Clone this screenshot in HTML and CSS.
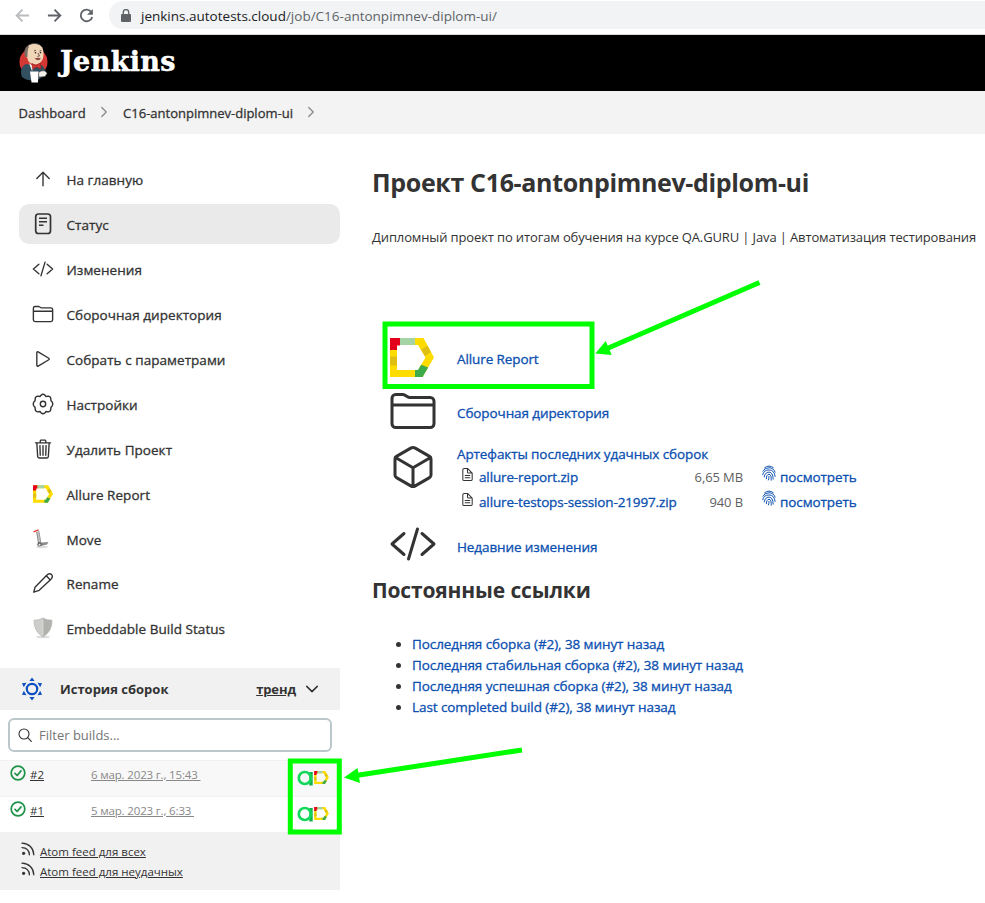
FILE: index.html
```html
<!DOCTYPE html>
<html lang="ru">
<head>
<meta charset="utf-8">
<title>C16-antonpimnev-diplom-ui [Jenkins]</title>
<link rel="stylesheet" href="styles.css">
</head>
<body>
<svg class="defs" width="0" height="0">
  <symbol id="allure" viewBox="0 0 44 39">
    <path fill-rule="evenodd" d="M0 0H33.500L44 19.500L32.500 39H0ZM7 7V32H28L35.500 19.500L28 7Z" fill="#ffdc00"/>
    <path d="M0 0H10V7.500H7V12H0Z" fill="#e3001b"/>
    <path d="M10 0H25V7H10Z" fill="#a4d4a5"/>
    <path d="M37.300 7.500L41 14L35 18.300L31 11.800Z" fill="#dfc012"/>
    <path d="M31.200 26.800L38.200 29.400L32.500 39H25V32H28Z" fill="#3cab49"/>
    <path d="M0 18.500H7V27.500H0Z" fill="#dfc012"/>
  </symbol>
  <symbol id="folder" viewBox="0 0 512 512">
    <path d="M440 432H72a40 40 0 01-40-40V120a40 40 0 0140-40h75.890a40 40 0 0122.190 6.720l27.840 18.560a40 40 0 0022.190 6.720H440a40 40 0 0140 40v240a40 40 0 01-40 40zM32 192h448" fill="none" stroke="currentColor" stroke-linecap="round" stroke-linejoin="round" stroke-width="32"/>
  </symbol>
  <symbol id="code" viewBox="0 0 512 512">
    <path d="M160 368L32 256l128-112M352 368l128-112-128-112M304 96l-96 320" fill="none" stroke="currentColor" stroke-linecap="round" stroke-linejoin="round" stroke-width="32"/>
  </symbol>
  <symbol id="doc" viewBox="0 0 512 512">
    <path d="M416 221.250V416a48 48 0 01-48 48H144a48 48 0 01-48-48V96a48 48 0 0148-48h98.750a32 32 0 0122.620 9.370l141.260 141.260a32 32 0 019.370 22.620zM256 56v120a32 32 0 0032 32h120M176 288h160M176 368h160" fill="none" stroke="currentColor" stroke-linecap="round" stroke-linejoin="round" stroke-width="36"/>
  </symbol>
  <symbol id="chevron" viewBox="0 0 16 16">
    <path d="M5 2l6 6-6 6" fill="none" stroke="currentColor" stroke-width="1.700" stroke-linecap="round" stroke-linejoin="round"/>
  </symbol>
  <symbol id="finger" viewBox="0 0 16 18">
    <path d="M3 3Q8-1 13 3M1 7Q3 3 8 3T15 8M.8 11Q1.800 5.500 8 5.500T15 13M2.500 13.500Q3.500 8 8 8T12.800 16M5 15.500Q5 10.500 8 10.500T10.500 17.300M7.300 17Q8.300 15 8 13" fill="none" stroke="currentColor" stroke-width="1.100" stroke-linecap="round"/>
  </symbol>
  <symbol id="ok" viewBox="0 0 16 16">
    <circle cx="8" cy="8" r="6.800" fill="none" stroke="#1e9248" stroke-width="1.700"/>
    <path d="M5 8.400l2.200 2.100L11 5.900" fill="none" stroke="#1e9248" stroke-width="1.700" stroke-linecap="round" stroke-linejoin="round"/>
  </symbol>
  <symbol id="rss" viewBox="0 0 14 14">
    <path d="M1 1.200C8 1.500 12.500 6 12.800 12.800M1 5.600C5.500 5.800 8.200 8.500 8.400 12.800" fill="none" stroke="currentColor" stroke-width="1.300" stroke-linecap="round"/>
    <circle cx="2.600" cy="11.300" r="1.600" fill="currentColor"/>
  </symbol>
  <symbol id="testops" viewBox="0 0 17 16">
    <path d="M12.300 2h3.400V15.500H12.300z" fill="#13b14c"/>
    <circle cx="7.800" cy="8" r="6" fill="none" stroke="#14d85a" stroke-width="2.700"/>
  </symbol>
</svg>

<div class="browser">
  <svg class="nav" viewBox="0 0 16 16"><path d="M15 8H2M8 1.800L1.800 8 8 14.200" fill="none" stroke="#babcbe" stroke-width="2"/></svg>
  <svg class="nav" viewBox="0 0 16 16"><path d="M1 8h13M8 1.800L14.200 8 8 14.200" fill="none" stroke="#5f6368" stroke-width="2"/></svg>
  <svg class="nav" viewBox="0 0 16 16"><path d="M13.300 4.500A6.200 6.200 0 1014.100 9.500" fill="none" stroke="#5f6368" stroke-width="2"/><path d="M14.800 1v6.300H8.500z" fill="#5f6368"/></svg>
  <div class="omnibox">
    <svg class="lock" viewBox="0 0 10 13"><path d="M1 5h8a1 1 0 011 1v6a1 1 0 01-1 1H1a1 1 0 01-1-1V6a1 1 0 011-1z" fill="#5f6368"/><path d="M2.300 6V3.300a2.700 2.700 0 015.400 0V6" fill="none" stroke="#5f6368" stroke-width="1.300"/></svg>
    <span class="url">jenkins.autotests.cloud<span class="path">/job/C16-antonpimnev-diplom-ui/</span></span>
  </div>
</div>

<header class="header">
  <svg class="butler" viewBox="0 0 30 40">
    <ellipse cx="14.500" cy="19" rx="14" ry="14" fill="#d33833"/>
    <path d="M3 34C1 29 2 23 7 21L13 22 22 22C25 23 27 28 27 32L20 36C14 39 6 37 3 34Z" fill="#335061"/>
    <path d="M7 8C7 3 11 .5 16 .6S24.500 4 24.500 10C25 16 22 21 17 21.500 11 21 9 19 8.500 15 6.500 14 6 11 7 8Z" fill="#f0d6b7"/>
    <path d="M6.500 14C4 9 6 4 9 2.500L10 4C8.500 6 9 8 8.500 10L8.500 14Z" fill="#7c6b62"/>
    <path d="M9 2.500C13-.5 21-.5 23.800 5" fill="none" stroke="#444" stroke-width=".9"/>
    <path d="M15 8l2-.8M20.500 8l2-.6M19 10l1.500 3-2 .4" fill="none" stroke="#5d4a40" stroke-width=".9"/>
    <circle cx="16.500" cy="9.700" r=".8" fill="#222"/><circle cx="21.500" cy="9.600" r=".8" fill="#222"/>
    <path d="M15.500 15.500Q19 14 22 15.500 19.500 19 15.500 15.500Z" fill="#8b4d43"/>
    <path d="M10 20L15 24 13 28Z" fill="#fff"/>
    <path d="M13 20.500L17 22.500 21.500 20 22 26 17.500 24 13.500 26.500Z" fill="#d33833" stroke="#8c1b19" stroke-width=".5"/>
    <path d="M11 28.500H19.500L19 39.500H12.500Z" fill="#fff"/>
    <path d="M19.500 30C22 27 27 27 28 30.500L26 33.500 20 34Z" fill="#f3efe9" stroke="#444" stroke-width=".5"/>
  </svg>
  <span class="brand">Jenkins</span>
</header>

<nav class="crumbs">
  <span>Dashboard</span>
  <svg class="sep"><use href="#chevron"/></svg>
  <span>C16-antonpimnev-diplom-ui</span>
  <svg class="sep"><use href="#chevron"/></svg>
</nav>

<div class="page">
  <aside class="side">
    <div class="tasks">
      <a class="task"><svg viewBox="0 0 512 512"><path d="M112 244l144-144 144 144M256 120v292" fill="none" stroke="currentColor" stroke-linecap="round" stroke-linejoin="round" stroke-width="32"/></svg><span>На главную</span></a>
      <a class="task active"><svg viewBox="0 0 22 22"><rect x="3.700" y="1" width="14.800" height="19.500" rx="2.800" fill="none" stroke="currentColor" stroke-width="1.700"/><path d="M7 5.300h8M7 8.800h8M7 12.300h4.500" fill="none" stroke="currentColor" stroke-width="1.600"/></svg><span>Статус</span></a>
      <a class="task"><svg><use href="#code"/></svg><span>Изменения</span></a>
      <a class="task"><svg><use href="#folder"/></svg><span>Сборочная директория</span></a>
      <a class="task"><svg viewBox="0 0 512 512"><path d="M112 111v290c0 17.440 17 28.520 31 20.160l247.900-148.370c12.120-7.250 12.120-26.330 0-33.580L143 90.840c-14-8.360-31 2.720-31 20.160z" fill="none" stroke="currentColor" stroke-width="32"/></svg><span>Собрать с параметрами</span></a>
      <a class="task"><svg viewBox="0 0 22 22"><path d="M9 2.200Q11 .2 13 2.200L14 3.500 16.500 3.100Q19 3.700 18.800 6.300L19 7.700 20 8.800Q21.500 11 20 13.200L19 14.300 18.800 15.700Q19 18.300 16.500 18.900L14 18.500 13 19.800Q11 21.800 9 19.800L8 18.500 5.500 18.900Q3 18.300 3.200 15.700L3 14.300 2 13.200Q.5 11 2 8.800L3 7.700 3.200 6.300Q3 3.700 5.500 3.100L8 3.500Z" fill="none" stroke="currentColor" stroke-width="1.400" stroke-linejoin="round"/><circle cx="11" cy="11" r="2.700" fill="none" stroke="currentColor" stroke-width="1.400"/></svg><span>Настройки</span></a>
      <a class="task"><svg viewBox="0 0 512 512"><path d="M112 112l20 320c.95 18.490 14.400 32 32 32h184c17.670 0 30.870-13.510 32-32l20-320M80 112h352M192 112V72a23.930 23.930 0 0124-24h80a23.930 23.930 0 0124 24v40M256 176v224M184 176l8 224M328 176l-8 224" fill="none" stroke="currentColor" stroke-linecap="round" stroke-linejoin="round" stroke-width="32"/></svg><span>Удалить Проект</span></a>
      <a class="task"><svg><use href="#allure" x="1" y="2" width="20" height="18"/></svg><span>Allure Report</span></a>
      <a class="task"><svg viewBox="0 0 22 22"><ellipse cx="10" cy="19" rx="6" ry="1.300" fill="#ddd"/><path d="M5.500 3.500L7.500 15.500" stroke="#c4c4c4" stroke-width="2.600"/><path d="M4.700 4L6.500 15M6.800 3L8.800 14" stroke="#777" stroke-width=".7"/><path d="M1.500 3.800L6.500 1.800" stroke="#e13a3a" stroke-width="1.300"/><path d="M8 14.500L10 14.500 16.500 14 15 16.500 9 18Z" fill="#8a8a8a"/><circle cx="7.500" cy="16.300" r="2.200" fill="#666"/><circle cx="7.500" cy="16.800" r="1" fill="#eee"/></svg><span>Move</span></a>
      <a class="task"><svg viewBox="0 0 22 22"><path d="M3 15.300L14.700 3.300Q17 .8 19.400 2.400 21.500 4.800 19 7.300L7.200 18.300 1.800 20.200ZM14.300 3.800L18.300 7.900" fill="none" stroke="currentColor" stroke-width="1.400" stroke-linejoin="round"/></svg><span>Rename</span></a>
      <a class="task"><svg viewBox="0 0 22 22"><ellipse cx="11" cy="20" rx="7" ry="1.300" fill="#ddd"/><path d="M11 1Q15 3.300 20 3.200 20.500 14 11 20Z" fill="#b1b2ae"/><path d="M11 1Q7 3.300 2 3.200 1.500 14 11 20Z" fill="#cdcecb"/><path d="M11 1Q15 3.300 20 3.200 20.500 14 11 20 1.500 14 2 3.200 7 3.300 11 1Z" fill="none" stroke="#b4b5b2" stroke-width=".7"/><path d="M11 3v15" stroke="#ddd" stroke-width=".8"/></svg><span>Embeddable Build Status</span></a>
    </div>

    <section class="history">
      <div class="history-head">
        <svg class="sun" viewBox="0 0 24 24"><circle cx="12" cy="12" r="5.200" fill="none" stroke="#0b4fc0" stroke-width="2.200"/><g fill="#0b4fc0"><path id="ray" d="M12 .4l2.600 3.700H9.400z"/><use href="#ray" transform="rotate(60 12 12)"/><use href="#ray" transform="rotate(120 12 12)"/><use href="#ray" transform="rotate(180 12 12)"/><use href="#ray" transform="rotate(240 12 12)"/><use href="#ray" transform="rotate(300 12 12)"/></g></svg>
        <b class="title">История сборок</b>
        <b class="trend">тренд</b>
        <svg class="down"><use href="#chevron"/></svg>
      </div>
      <div class="filter">
        <svg viewBox="0 0 14 14"><circle cx="6" cy="6" r="5" fill="none" stroke="#333" stroke-width="1.100"/><path d="M9.700 9.700L13.300 13.300" stroke="#333" stroke-width="1.200" stroke-linecap="round"/></svg>
        <span>Filter builds...</span>
      </div>
      <div class="build odd">
        <svg class="ok"><use href="#ok"/></svg><a class="num">#2</a><a class="date">6 мар. 2023 г., 15:43&nbsp;</a>
        <span class="badges"><svg class="b1"><use href="#testops"/></svg><svg class="b2"><use href="#allure"/></svg></span>
      </div>
      <div class="build">
        <svg class="ok"><use href="#ok"/></svg><a class="num">#1</a><a class="date">5 мар. 2023 г., 6:33&nbsp;</a>
        <span class="badges"><svg class="b1"><use href="#testops"/></svg><svg class="b2"><use href="#allure"/></svg></span>
      </div>
      <div class="feeds">
        <div class="feed"><svg><use href="#rss"/></svg><a>Atom feed для всех</a></div>
        <div class="feed"><svg><use href="#rss"/></svg><a>Atom feed для неудачных</a></div>
      </div>
    </section>
  </aside>

  <main class="main">
    <h1>Проект C16-antonpimnev-diplom-ui</h1>
    <p class="desc">Дипломный проект по итогам обучения на курсе QA.GURU | Java | Автоматизация тестирования</p>
    <div class="links">
      <div class="row"><svg><use href="#allure" x="1" y="4" width="44" height="39"/></svg><a>Allure Report</a></div>
      <div class="row dir"><svg><use href="#folder"/></svg><a>Сборочная директория</a></div>
      <div class="row artifacts">
        <svg viewBox="0 0 512 512"><path d="M448 341.370V170.610A32 32 0 00432.110 143l-152-88.460a47.940 47.940 0 00-48.240 0L79.890 143A32 32 0 0064 170.610v170.760A32 32 0 0079.890 369l152 88.460a48 48 0 0048.240 0l152-88.460A32 32 0 00448 341.370zM69 153.990l187 110 187-110M256 463.990v-200" fill="none" stroke="currentColor" stroke-linecap="round" stroke-linejoin="round" stroke-width="32"/></svg>
        <div class="files">
          <a>Артефакты последних удачных сборок</a>
          <div class="file"><svg class="doc"><use href="#doc"/></svg><a class="name">allure-report.zip</a><span class="size">6,65 MB</span><svg class="fp"><use href="#finger"/></svg><a>посмотреть</a></div>
          <div class="file"><svg class="doc"><use href="#doc"/></svg><a class="name">allure-testops-session-21997.zip</a><span class="size">940 B</span><svg class="fp"><use href="#finger"/></svg><a>посмотреть</a></div>
        </div>
      </div>
      <div class="row changes"><svg><use href="#code"/></svg><a>Недавние изменения</a></div>
    </div>
    <h2>Постоянные ссылки</h2>
    <ul class="perma">
      <li><a>Последняя сборка (#2), 38 минут назад</a></li>
      <li><a>Последняя стабильная сборка (#2), 38 минут назад</a></li>
      <li><a>Последняя успешная сборка (#2), 38 минут назад</a></li>
      <li><a>Last completed build (#2), 38 минут назад</a></li>
    </ul>
  </main>
</div>

<svg class="marks" viewBox="0 0 985 903">
  <g fill="none" stroke="#0f0" stroke-width="5">
    <rect x="385" y="324" width="207" height="62.500"/>
    <path d="M759.500 282.500L606 349"/>
    <rect x="290.300" y="761" width="49" height="71"/>
    <path d="M522 750L356 775.500"/>
  </g>
  <g fill="#0f0">
    <path d="M595.300 353.400L605.700 341 611.700 355Z"/>
    <path d="M344 777.500L357.500 768 360 783Z"/>
  </g>
</svg>
</body>
</html>
```
FILE: styles.css
```css
* { box-sizing: border-box; }
body { margin: 0; width: 985px; height: 903px; overflow: hidden; background: #fff; color: #333; font: 400 13.5px/20px "Open Sans", "Noto Sans", sans-serif; white-space: nowrap; }
.defs { position: absolute; }
svg { display: block; flex: none; }
a { color: inherit; }

.browser { display: flex; align-items: center; height: 35px; padding: 0 0 4px 15px; gap: 17px; border-bottom: 1px solid #d8dadd; background: #fff; }
.nav { width: 15px; height: 15px; }
.omnibox { display: flex; align-items: center; flex: 1; height: 28px; margin-left: -2px; padding-left: 12px; gap: 10px; border-radius: 14px 0 0 14px; background: #f1f3f4; }
.lock { width: 10px; height: 13px; }
.url { padding-top: 2px; font-size: 13.5px; color: #202124; }
.path { color: #5f6368; }

.header { display: flex; align-items: center; height: 56px; padding-left: 19px; gap: 11px; background: #000; }
.butler { width: 30px; height: 40px; }
.brand { padding-bottom: 2px; color: #fff; font: 700 27px/40px "DejaVu Serif", serif; letter-spacing: .35px; -webkit-text-stroke: .5px #fff; }

.crumbs { display: flex; align-items: center; height: 43px; padding-left: 18.500px; background: #f3f3f3; font-size: 13px; -webkit-text-stroke: .3px; }
.sep { width: 12px; height: 12px; margin: -2px 13.500px 0 12px; color: #888; }

.page { display: flex; }
.side { width: 340px; flex: none; padding-top: 25.500px; }
.tasks { display: flex; flex-direction: column; gap: 5px; margin-left: 19px; }
.task { display: flex; align-items: center; height: 39.900px; padding-left: 13px; gap: 12.500px; border-radius: 10px; letter-spacing: .05px; -webkit-text-stroke: .3px; }
.task svg { width: 22px; height: 22px; }
.task span { padding-top: 2px; }
.active { background: #eaeaea; }

.history { margin-top: 19.600px; }
.history-head { display: flex; align-items: center; height: 42px; padding-left: 20px; background: #f1f1f1; font-size: 13px; }
.sun { width: 24px; height: 24px; margin-right: 16px; }
.trend { margin-left: auto; text-decoration: underline; letter-spacing: -.1px; }
.down { width: 14px; height: 14px; margin: 0 21px 0 9px; transform: rotate(90deg); }
.filter { display: flex; align-items: center; width: 324px; height: 34px; margin: 8px; padding-left: 8px; gap: 7px; border: 2px solid #bcc7cc; border-radius: 6px; color: #757575; font-size: 13px; }
.filter svg { width: 14px; height: 14px; }
.build { display: flex; height: 36px; padding: 4px 0 0 10px; font-size: 11.5px; border-top: 1px solid #f1f1f1; }
.odd { background: #f8f8f8; }
.ok { width: 16px; height: 16px; margin-right: 4px; }
.num { width: 61px; text-decoration: underline; }
.date { color: #888; text-decoration: underline; letter-spacing: -.16px; }
.badges { display: flex; margin-left: auto; padding: 5px 11px 0 0; }
.b1 { width: 17px; height: 16px; }
.b2 { width: 15px; height: 13px; margin-top: 1px; }
.feeds { height: 58px; padding: 10px 0 0 21px; background: #f1f1f1; font-size: 11.5px; }
.feed { display: flex; height: 20px; gap: 5px; }
.feed svg { width: 14px; height: 14px; }
.feed a { text-decoration: underline; }

.main { padding-left: 32px; }
h1 { margin: 31px 0 0; font-size: 25px; line-height: 34px; letter-spacing: -.34px; }
.desc { margin: 28px 0 0; font-size: 13px; line-height: 20px; letter-spacing: -.13px; }
.links { margin-top: 87px; padding-left: 17px; color: #0b4fb0; letter-spacing: -.1px; -webkit-text-stroke: .3px; }
.row { display: flex; align-items: center; height: 48px; margin-bottom: 5px; gap: 20px; }
.row > svg { width: 48px; height: 48px; color: #333; }
.row > a { padding-top: 2px; }
.row.dir { margin-bottom: 8px; }
.row.dir > a { padding-top: 4px; }
.row.changes > a { padding-top: 6px; }
.artifacts { align-items: flex-start; height: 72px; }
.files { padding-top: 1px; }
.file { display: flex; height: 25px; line-height: 26px; }
.doc { width: 15px; height: 15px; margin: 3px 4px 0 3px; color: #333; }
.name { width: 198px; letter-spacing: -.14px; }
.size { width: 66px; text-align: right; color: #5f5f5f; font-size: 13px; -webkit-text-stroke: 0; }
.fp { width: 14px; height: 16px; margin: 1px 4px 0 19px; }
h2 { margin: 7px 0 0; font-size: 21px; line-height: 30px; letter-spacing: -.15px; }
.perma { margin: 29px 0 0; padding-left: 40px; line-height: 21px; letter-spacing: -.08px; -webkit-text-stroke: .3px; }
.perma a { color: #0b4fb0; }
.marks { position: absolute; left: 0; top: 0; width: 985px; height: 903px; }
```
